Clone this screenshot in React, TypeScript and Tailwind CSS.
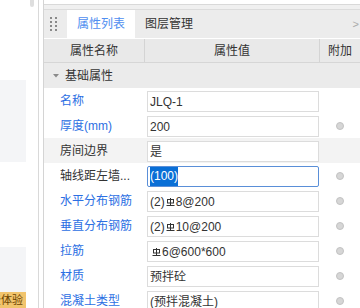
import React from "react";

const FONT = { fontFamily: '"Liberation Sans", "Noto Sans CJK SC", sans-serif' };

function Rebar() {
  return (
    <svg width="9" height="9" viewBox="0 0 9 9" className="inline-block align-top mt-[1px] mx-[1px]" fill="none" stroke="#333" strokeWidth="1">
      <rect x="1.5" y="1.5" width="6" height="3.5" />
      <line x1="4.5" y1="0" x2="4.5" y2="7.5" />
      <line x1="0.5" y1="7.5" x2="8.5" y2="7.5" />
    </svg>
  );
}

type Row = {
  label: string;
  blue: boolean;
  value: React.ReactNode;
  circle: boolean;
  gray?: boolean;
  focus?: boolean;
};

const rows: Row[] = [
  { label: "名称", blue: true, value: "JLQ-1", circle: false },
  { label: "厚度(mm)", blue: true, value: "200", circle: true },
  { label: "房间边界", blue: false, value: "是", circle: false, gray: true },
  {
    label: "轴线距左墙...",
    blue: false,
    value: <span className="bg-[#0a6fd6] text-white leading-[19px] inline-block">(100)</span>,
    circle: true,
    focus: true,
  },
  { label: "水平分布钢筋", blue: true, value: <>(2)<Rebar />8@200</>, circle: true },
  { label: "垂直分布钢筋", blue: true, value: <>(2)<Rebar />10@200</>, circle: true },
  { label: "拉筋", blue: true, value: <><span className="inline-block w-[1px]" /><Rebar />6@600*600</>, circle: true },
  { label: "材质", blue: true, value: "预拌砼", circle: true },
  { label: "混凝土类型", blue: true, value: "(预拌混凝土)", circle: true },
];

export default function App() {
  return (
    <div className="w-[360px] h-[308px] overflow-hidden flex bg-white text-[12px] text-[#333]" style={FONT}>
      {/* left panel */}
      <div className="w-[39px] shrink-0 border-r border-[#d9d9d9] flex flex-col">
        <div className="ml-[30px] w-[4px] h-[7px] rounded-b-full bg-[#dedede]" />
        <div className="mt-[73px] w-[26px] h-[83px] bg-[#f4f5f7]" />
        <div className="mt-[85px] w-[26px] h-[45px] bg-[#f4f5f7]" />
        <div className="w-[26px] h-[16px] bg-[#f1c46d] overflow-hidden flex justify-end items-center">
          <span className="whitespace-nowrap text-[11px] leading-[14px] text-[#6b4300] pr-[3px]">免费体验</span>
        </div>
      </div>
      <div className="w-[4px] shrink-0" />
      {/* right panel */}
      <div className="w-[317px] shrink-0 border-l border-[#d4d4d4] flex flex-col bg-white">
        <div className="h-[5px] bg-white border-b border-[#d9d9d9] shrink-0" />
        <div className="h-[4px] bg-[#f0f0f0] shrink-0" />
        {/* tab bar */}
        <div className="h-[29px] border-t border-[#dcdcdc] bg-[#ececec] flex items-stretch shrink-0">
          <div className="pl-[6px] flex items-center">
            <div className="grid grid-cols-2 gap-x-[3px] gap-y-[2px]">
              {Array.from({ length: 8 }).map((_, i) => (
                <div key={i} className="w-[2px] h-[2px] bg-[#8a8a8a]" />
              ))}
            </div>
          </div>
          <div className="ml-[10px] w-[68px] bg-white flex items-center justify-center text-[#4f8ef0] text-[12px]">
            属性列表
          </div>
          <div className="ml-[10px] flex items-center text-[12px] text-[#333]">图层管理</div>
          <div className="ml-auto flex items-center pr-[1px] text-[#aaa] text-[11px]">&gt;</div>
        </div>
        {/* header */}
        <div className="border-t border-white border-b border-b-[#d6d6d6] bg-[#e9e9e9] h-[25px] grid grid-cols-[101px_175px_1fr] shrink-0">
          <div className="border-r border-[#d4d4d4] flex items-center justify-center">属性名称</div>
          <div className="border-r border-[#d4d4d4] flex items-center justify-center">属性值</div>
          <div className="flex items-center justify-center">附加</div>
        </div>
        {/* group */}
        <div className="h-[25px] bg-[#ebebeb] flex items-center shrink-0">
          <svg width="6" height="4" viewBox="0 0 6 4" className="ml-[9px] mr-[6px]">
            <path d="M0 0 L6 0 L3 3.5 Z" fill="#8a8a8a" />
          </svg>
          <span>基础属性</span>
        </div>
        {rows.map((r, i) => (
          <div
            key={i}
            className={`h-[25px] shrink-0 grid grid-cols-[101px_175px_1fr] ${r.gray ? "bg-[#f3f3f3]" : "bg-white"}`}
          >
            <div className={`pl-[16px] flex items-center whitespace-nowrap ${r.blue ? "text-[#2c6fe3]" : "text-[#333]"}`}>
              {r.label}
            </div>
            <div className="pt-[3px] pl-[2px]">
              <div
                className={`w-[172px] h-[21px] bg-white flex items-center pl-[2px] whitespace-nowrap ${
                  r.focus ? "border border-[#5a8fd8] rounded-[2px]" : "border border-[#dcdcdc]"
                }`}
              >
                {r.value}
              </div>
            </div>
            <div className="flex items-center justify-center">
              {r.circle && <div className="w-[8px] h-[8px] rounded-full bg-[#d6d6d6] border border-[#c2c2c2]" />}
            </div>
          </div>
        ))}
      </div>
    </div>
  );
}
